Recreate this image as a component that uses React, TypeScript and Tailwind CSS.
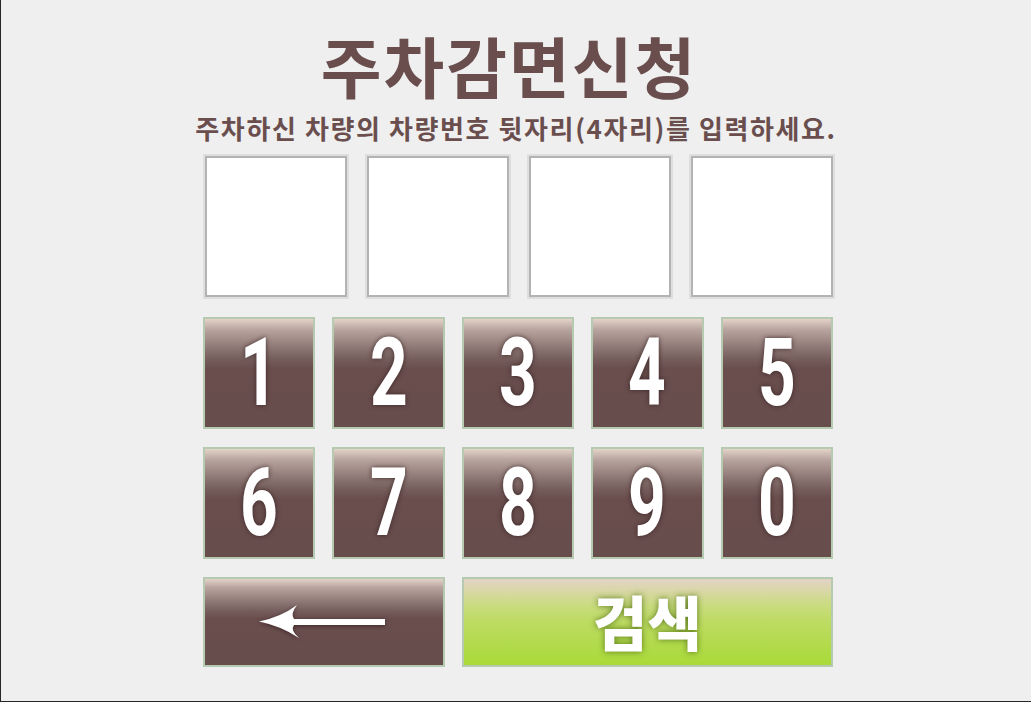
import React from "react";

const keys = ["1", "2", "3", "4", "5", "6", "7", "8", "9", "0"];

const keyBg =
  "bg-[linear-gradient(to_bottom,#e3d3c8_0%,#b8a49f_10%,#8f7976_26%,#77605e_36%,#6a4e4e_46%,#684d4d_100%)]";

function BackArrow() {
  return (
    <svg width="130" height="37" viewBox="-2 -2 130 37" className="drop-shadow-[0_1px_2px_rgba(40,20,20,0.7)]">
      <path
        d="M0 16.5 Q22 12 38 0 Q31 9 35 14 L126 14 L126 20 L35 20 Q31 25 40 33 Q22 21 0 16.5 Z"
        fill="#ffffff"
      />
    </svg>
  );
}

export default function App() {
  return (
    <div className="w-[1031px] h-[702px] bg-[#efefef] border-l border-b border-[#262626] flex flex-col font-['Noto_Sans_CJK_KR',sans-serif] overflow-hidden">
      {/* Title */}
      <h1 className="mt-[24px] text-center text-[66px] leading-[80px] font-bold tracking-[2px] text-[#6a4e4e] pr-[14px]">
        주차감면신청
      </h1>
      <p className="mt-[7px] text-center text-[26px] leading-[34px] font-bold tracking-[1.6px] text-[#6a4e4e]">
        주차하신 차량의 차량번호 뒷자리(4자리)를 입력하세요.
      </p>

      <div className="pl-[202px] mt-[9px] flex flex-col">
        {/* Input boxes */}
        <div className="flex gap-[16px]">
          {[0, 1, 2, 3].map((i) => (
            <div key={i} className="w-[146px] h-[145px] bg-[#dedede] p-[2px]">
              <div className="w-full h-full bg-white border-2 border-[#b3b3b3]" />
            </div>
          ))}
        </div>

        {/* Keypad */}
        <div className="mt-[18px] w-[630px] grid grid-cols-5 grid-rows-[112px_112px_90px] gap-x-[17px] gap-y-[18px]">
          {keys.map((k) => (
            <button
              key={k}
              className={`border-2 border-[#b6c9b1] ${keyBg} flex items-center justify-center overflow-hidden`}
            >
              <span className="block scale-x-[0.7] text-white font-['Roboto',sans-serif] font-bold text-[94px] leading-none mt-[-1px] [text-shadow:0_0_6px_rgba(50,30,30,0.85)]">
                {k}
              </span>
            </button>
          ))}
          <button
            className={`col-span-2 border-2 border-[#b6c9b1] ${keyBg} flex items-center justify-center`}
          >
            <span className="ml-[-4px] mt-[-2px]">
              <BackArrow />
            </span>
          </button>
          <button className="col-span-3 border-2 border-[#b6c9b1] bg-[linear-gradient(to_bottom,#e3d3c6_0%,#d9d7a6_14%,#cadc80_30%,#bddb62_50%,#a9da38_100%)] flex items-center justify-center">
            <span className="text-white font-['Noto_Sans_CJK_KR',sans-serif] font-black text-[59px] leading-none mt-[-4px] [text-shadow:0_0_6px_rgba(80,110,20,0.9)]">
              검색
            </span>
          </button>
        </div>
      </div>
    </div>
  );
}
